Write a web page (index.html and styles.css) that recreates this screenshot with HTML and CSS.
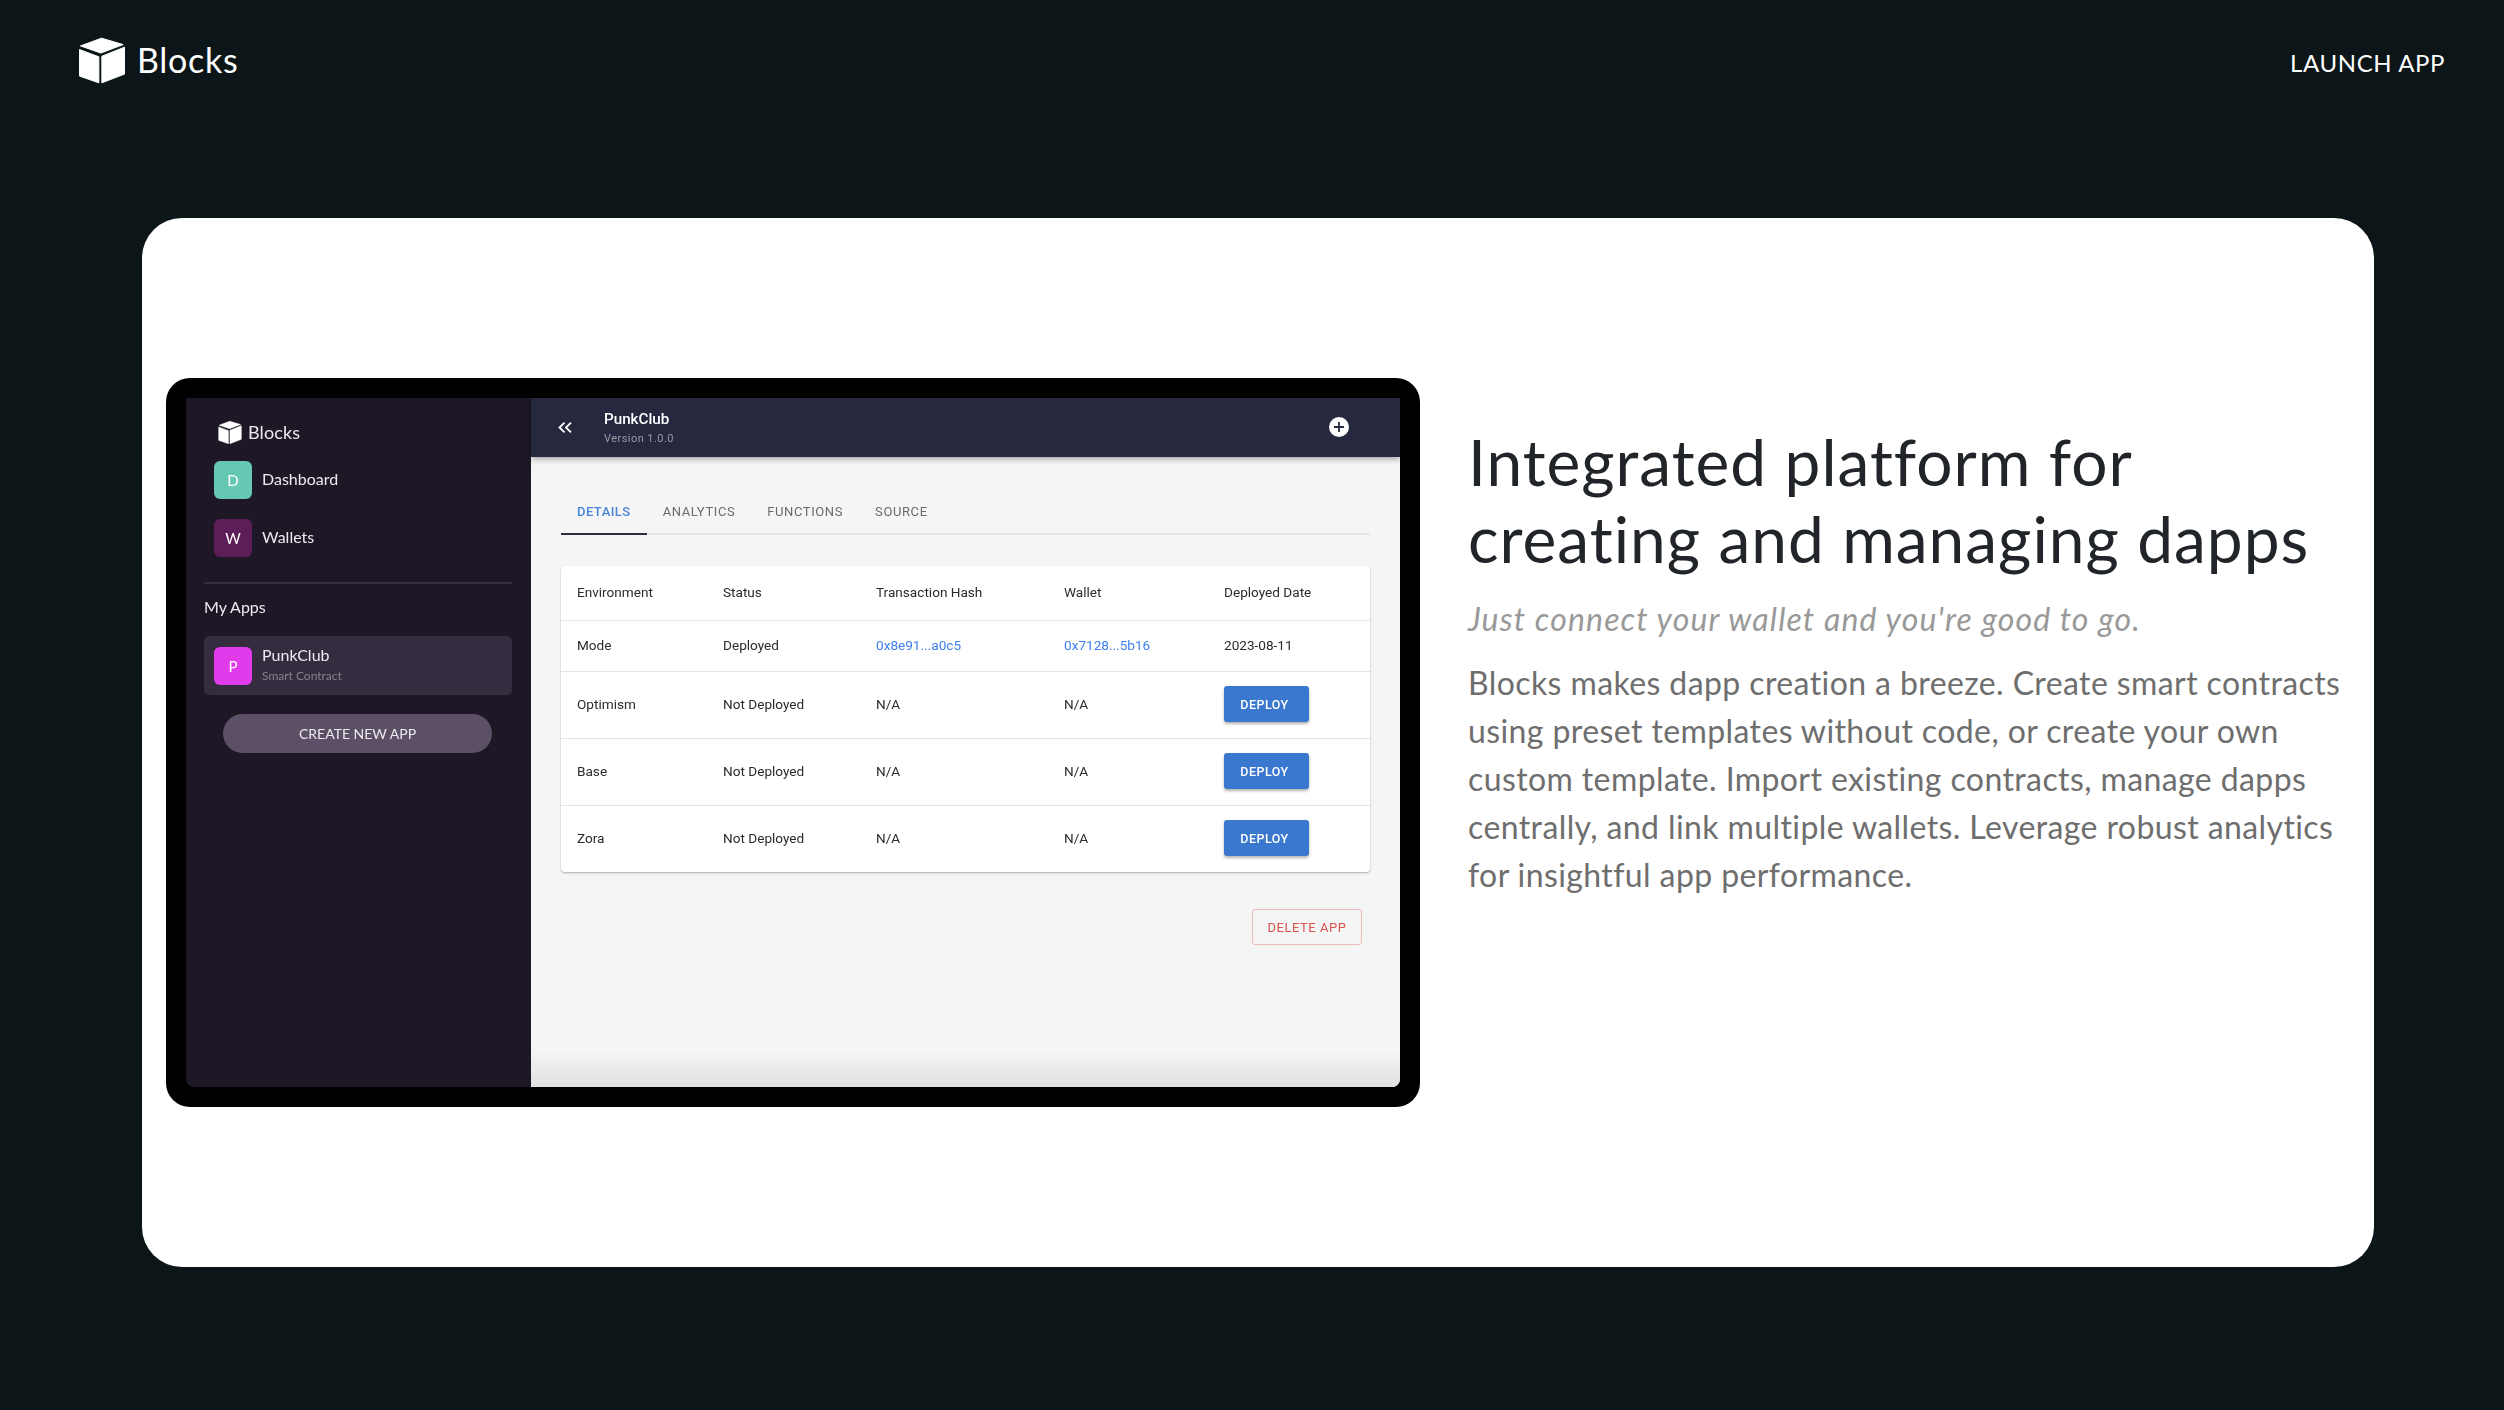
FILE: index.html
```html
<!DOCTYPE html>
<html lang="en">

<head>
    <meta charset="UTF-8">
    <meta name="viewport" content="width=device-width, initial-scale=1.0">
    <title>Blocks</title>
    <link rel="stylesheet" href="styles.css">
</head>

<body>
    <header class="topbar">
        <a class="brand" href="#">
            <svg class="brand-icon" viewBox="0 0 46.3 46" fill="#fff" stroke="#fff" stroke-width="1" stroke-linejoin="round">
                <polygon points="22.7,0.5 44.5,7 22,15.5 1.5,8.3" />
                <polygon points="0.5,12 20,19.3 20,45.5 0.5,38.7" />
                <polygon points="23,18.7 45.8,9.6 45.8,36.7 23,45.5" />
            </svg>
            <span class="brand-name">Blocks</span>
        </a>
        <a class="launch" href="#">LAUNCH APP</a>
    </header>

    <main class="card">
        <div class="frame">
            <div class="app">
                <aside class="sidebar">
                    <div class="side-logo">
                        <svg class="side-logo-icon" viewBox="0 0 46.3 46" fill="#fff" stroke="#fff" stroke-width="1" stroke-linejoin="round">
                            <polygon points="22.7,0.5 44.5,7 22,15.5 1.5,8.3" />
                            <polygon points="0.5,12 20,19.3 20,45.5 0.5,38.7" />
                            <polygon points="23,18.7 45.8,9.6 45.8,36.7 23,45.5" />
                        </svg>
                        <span>Blocks</span>
                    </div>
                    <div class="nav-item">
                        <span class="avatar teal">D</span>
                        <span>Dashboard</span>
                    </div>
                    <div class="nav-item">
                        <span class="avatar plum">W</span>
                        <span>Wallets</span>
                    </div>
                    <hr class="side-line">
                    <div class="side-title">My Apps</div>
                    <div class="app-item">
                        <span class="avatar pink">P</span>
                        <div>
                            <div class="app-name">PunkClub</div>
                            <div class="app-type">Smart Contract</div>
                        </div>
                    </div>
                    <button class="create-btn">CREATE NEW APP</button>
                </aside>

                <section class="content">
                    <div class="appbar">
                        <svg class="back-icon" viewBox="0 0 14 11" fill="none" stroke="#fff" stroke-width="1.8">
                            <path d="M6.5 0.7 1.5 5.5 6.5 10.3" />
                            <path d="M13 0.7 8 5.5 13 10.3" />
                        </svg>
                        <div class="appbar-title">
                            <div class="appbar-name">PunkClub</div>
                            <div class="appbar-version">Version 1.0.0</div>
                        </div>
                        <svg class="plus-icon" viewBox="0 0 20 20">
                            <circle cx="10" cy="10" r="10" fill="#fff" />
                            <path d="M10 5v10M5 10h10" stroke="#262840" stroke-width="1.8" />
                        </svg>
                    </div>

                    <div class="panel">
                        <div class="tabs">
                            <span class="tab active">DETAILS</span>
                            <span class="tab">ANALYTICS</span>
                            <span class="tab">FUNCTIONS</span>
                            <span class="tab">SOURCE</span>
                        </div>

                        <table class="deploys">
                            <colgroup>
                                <col class="col-env">
                                <col class="col-status">
                                <col class="col-hash">
                                <col class="col-wallet">
                                <col>
                            </colgroup>
                            <thead>
                                <tr>
                                    <th>Environment</th>
                                    <th>Status</th>
                                    <th>Transaction Hash</th>
                                    <th>Wallet</th>
                                    <th>Deployed Date</th>
                                </tr>
                            </thead>
                            <tbody>
                                <tr class="row-done">
                                    <td>Mode</td>
                                    <td>Deployed</td>
                                    <td><a href="#">0x8e91...a0c5</a></td>
                                    <td><a href="#">0x7128...5b16</a></td>
                                    <td>2023-08-11</td>
                                </tr>
                                <tr>
                                    <td>Optimism</td>
                                    <td>Not Deployed</td>
                                    <td>N/A</td>
                                    <td>N/A</td>
                                    <td><button class="deploy-btn">DEPLOY</button></td>
                                </tr>
                                <tr>
                                    <td>Base</td>
                                    <td>Not Deployed</td>
                                    <td>N/A</td>
                                    <td>N/A</td>
                                    <td><button class="deploy-btn">DEPLOY</button></td>
                                </tr>
                                <tr>
                                    <td>Zora</td>
                                    <td>Not Deployed</td>
                                    <td>N/A</td>
                                    <td>N/A</td>
                                    <td><button class="deploy-btn">DEPLOY</button></td>
                                </tr>
                            </tbody>
                        </table>

                        <div class="panel-foot">
                            <button class="delete-btn">DELETE APP</button>
                        </div>
                    </div>
                </section>
            </div>
        </div>

        <div class="copy">
            <h1>Integrated platform for<br>creating and managing dapps</h1>
            <p class="tagline">Just connect your wallet and you're good to go.</p>
            <p class="blurb">Blocks makes dapp creation a breeze. Create smart contracts<br>using preset templates without code, or create your own<br>custom template. Import existing contracts, manage dapps<br>centrally, and link multiple wallets. Leverage robust analytics<br>for insightful app performance.</p>
        </div>
    </main>
</body>

</html>
```

FILE: styles.css
```css
* {
    box-sizing: border-box;
    margin: 0;
    padding: 0;
}

body {
    min-height: 100vh;
    background-color: #0c1518;
    font-family: "Lato", "Open Sans", sans-serif;
    overflow: hidden;
}

a {
    color: inherit;
    text-decoration: none;
}

.topbar {
    height: 218px;
    padding: 37px 59px 0 79px;
    display: flex;
    justify-content: space-between;
    align-items: flex-start;
    color: #fff;
}

.brand {
    display: flex;
    align-items: center;
    gap: 12px;
    font-size: 34px;
    line-height: 47px;
    letter-spacing: 0.7px;
}

.brand-icon {
    width: 46px;
    height: 47px;
}

.brand-name {
    margin-top: -2px;
}

.launch {
    margin-top: 9px;
    font-size: 24px;
    line-height: 34px;
    letter-spacing: 0.6px;
}

.card {
    margin: 0 130px 0 142px;
    height: 1049px;
    padding-left: 24px;
    background-color: #fff;
    border-radius: 40px;
    display: flex;
    align-items: flex-start;
    gap: 48px;
}

.frame {
    margin-top: 160px;
    flex: none;
    width: 1254px;
    height: 729px;
    padding: 20px;
    background-color: #000;
    border-radius: 24px;
}

/* the inner app is a picture in the original, so it sits a little soft */
.app {
    height: 100%;
    display: flex;
    overflow: hidden;
    border-radius: 0 0 8px 8px;
    filter: blur(0.4px);
}

/* sidebar */
.sidebar {
    flex: none;
    width: 345px;
    padding: 23px 19px 0 18px;
    background-color: #1e1826;
    color: #eceaee;
    font-size: 16px;
    display: flex;
    flex-direction: column;
}

.side-logo {
    height: 40px;
    margin-left: 14px;
    display: flex;
    align-items: flex-start;
    gap: 6px;
    font-size: 18px;
    line-height: 23px;
    letter-spacing: 0.1px;
}

.side-logo-icon {
    width: 24px;
    height: 23px;
}

.nav-item {
    height: 38px;
    margin-bottom: 20px;
    padding-left: 10px;
    display: flex;
    align-items: center;
    gap: 10px;
}

.nav-item span:last-child {
    margin-top: -3px;
}

.avatar {
    flex: none;
    width: 38px;
    height: 38px;
    border-radius: 6px;
    display: flex;
    justify-content: center;
    align-items: center;
    font-size: 15px;
    color: #fff;
}

.teal {
    background-color: #66c7b3;
}

.plum {
    background-color: #5c1d58;
}

.pink {
    background-color: #e03ceb;
}

.side-line {
    border: none;
    height: 2px;
    margin: 5px 0 13px;
    background-color: #352f3d;
}

.side-title {
    line-height: 20px;
    margin-bottom: 19px;
}

.app-item {
    height: 59px;
    padding-left: 10px;
    background-color: #352c40;
    border-radius: 5px;
    display: flex;
    align-items: center;
    gap: 10px;
}

.app-name {
    line-height: 20px;
    margin: -2px 0 3px;
}

.app-type {
    font-size: 12px;
    line-height: 16px;
    color: #87818e;
}

.create-btn {
    width: 269px;
    height: 39px;
    margin: 19px 0 0 19px;
    border: none;
    border-radius: 20px;
    background-color: #5c5066;
    color: #eceaee;
    font-family: inherit;
    font-size: 14px;
}

/* main area */
.content {
    flex: 1;
    background-color: #f5f5f5;
    background-image: linear-gradient(to top, #e0e0e0, #f5f5f5 36px);
    font-family: "Roboto", sans-serif;
    color: #2b2b2b;
    display: flex;
    flex-direction: column;
}

.appbar {
    flex: none;
    height: 59px;
    padding: 0 51px 1px 27px;
    background-color: #262840;
    box-shadow: 0 2px 6px rgba(0, 0, 0, 0.35);
    display: flex;
    align-items: center;
}

.back-icon {
    width: 14px;
    height: 11px;
}

.appbar-title {
    margin-left: 32px;
    flex: 1;
}

.appbar-name {
    font-size: 15.2px;
    font-weight: 500;
    line-height: 20px;
    color: #fff;
}

.appbar-version {
    font-size: 11px;
    line-height: 15px;
    letter-spacing: 0.45px;
    color: #9a9aa3;
    margin-top: 2px;
}

.plus-icon {
    width: 20px;
    height: 20px;
}

.panel {
    padding: 0 30px;
}

.tabs {
    margin-top: 34px;
    height: 44px;
    border-bottom: 2px solid #e6e6e6;
    display: flex;
}

.tab {
    height: 44px;
    padding: 13px 16px 0;
    font-size: 13px;
    font-weight: 400;
    letter-spacing: 0.6px;
    color: #6a6a6a;
}

.tab.active {
    color: #4a84d8;
    font-weight: 500;
    letter-spacing: 0.45px;
    border-bottom: 2px solid #2a2d45;
}

.deploys {
    margin-top: 31px;
    width: 100%;
    table-layout: fixed;
    border-collapse: collapse;
    background-color: #fff;
    border-radius: 4px;
    box-shadow: 0 1px 2px rgba(0, 0, 0, 0.3);
    font-size: 13.6px;
}

.col-env {
    width: 146px;
}

.col-status {
    width: 153px;
}

.col-hash {
    width: 188px;
}

.col-wallet {
    width: 160px;
}

.deploys th,
.deploys td {
    padding: 0 0 1px 16px;
    text-align: left;
    font-weight: 400;
    color: #2b2b2b;
}

.deploys th {
    height: 54px;
}

.deploys td {
    height: 67px;
}

.deploys tr {
    border-bottom: 1px solid #e4e4e4;
}

.deploys tbody tr:last-child {
    border-bottom: none;
}

.deploys .row-done td {
    height: 51px;
}

.deploys a {
    color: #3d7ff0;
}

.deploy-btn {
    display: block;
    width: 85px;
    height: 36px;
    border: none;
    border-radius: 3px;
    background-color: #3a78cf;
    box-shadow: 0 2px 3px rgba(0, 0, 0, 0.3);
    color: #fff;
    font-family: inherit;
    font-size: 12.5px;
    font-weight: 500;
    letter-spacing: 0.5px;
    padding-right: 4px;
}

.panel-foot {
    margin-top: 37px;
    padding-right: 8px;
    display: flex;
    justify-content: flex-end;
}

.delete-btn {
    width: 110px;
    height: 36px;
    border: 1px solid #eeb9b9;
    border-radius: 3px;
    background-color: transparent;
    color: #d9534f;
    font-family: inherit;
    font-size: 13px;
    font-weight: 400;
    letter-spacing: 0.55px;
}

/* text column */
.copy {
    padding-top: 205px;
    white-space: nowrap;
}

.copy h1 {
    font-size: 64px;
    font-weight: 400;
    line-height: 77px;
    letter-spacing: 1px;
    color: #212529;
}

.tagline {
    margin-top: 18px;
    font-size: 32px;
    font-style: italic;
    line-height: 48px;
    letter-spacing: 1.15px;
    color: #999;
}

.blurb {
    margin-top: 16px;
    font-size: 32px;
    line-height: 48px;
    letter-spacing: 0.4px;
    color: #6e6e6e;
}
```
